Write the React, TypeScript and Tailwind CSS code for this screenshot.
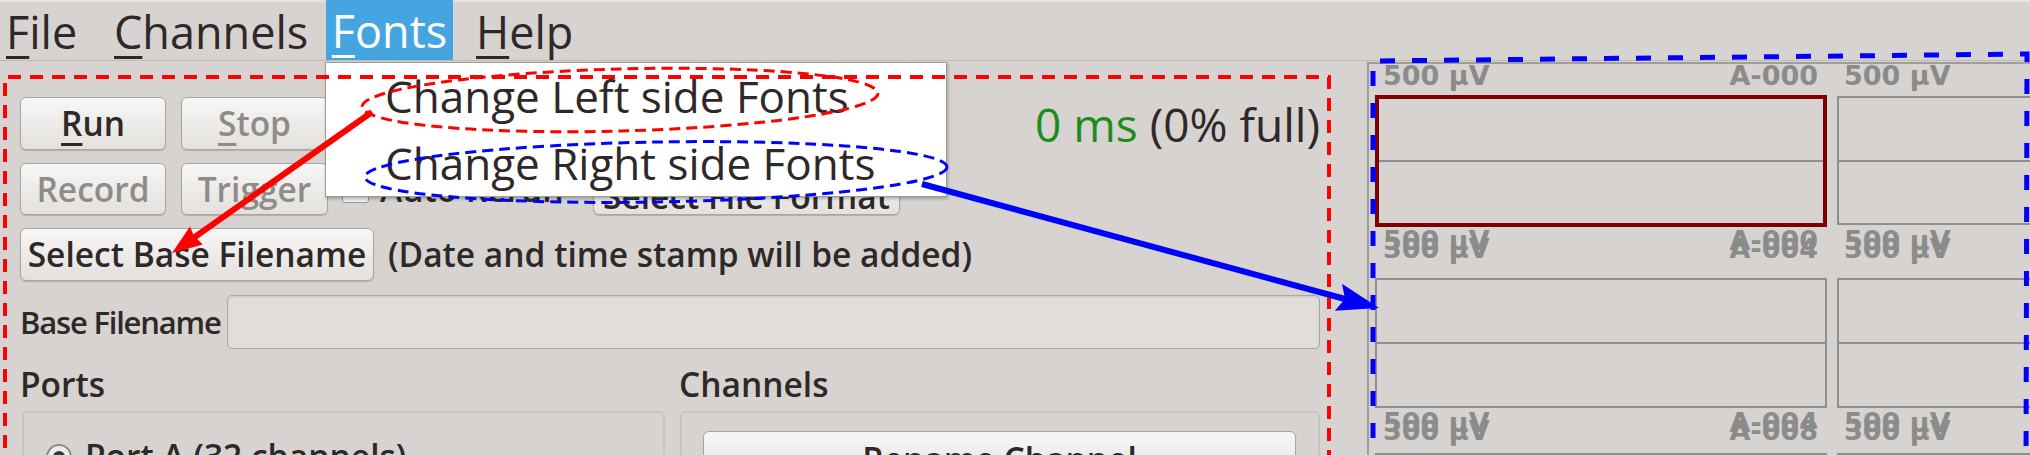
import React from "react";

const ui = "font-['Open_Sans',sans-serif]";
const dv = "font-['DejaVu_Sans',sans-serif] font-bold text-[27px] leading-[27px] text-[#8b8b8b] whitespace-nowrap";

function Btn({
  children,
  className = "",
  disabled = false,
}: {
  children: React.ReactNode;
  className?: string;
  disabled?: boolean;
}) {
  return (
    <div
      className={
        "flex justify-center rounded-[6px] border border-[#a9a5a1] bg-linear-to-b from-[#f8f7f6] to-[#e3e0dd] shadow-[0_1px_1px_rgba(0,0,0,0.18)] text-[33.5px] font-semibold whitespace-nowrap " +
        (disabled ? "text-[#8f8b88] " : "text-[#2f2828] ") +
        className
      }
    >
      {children}
    </div>
  );
}

function Mn({ children }: { children: React.ReactNode }) {
  return (
    <span className="underline decoration-[3px] underline-offset-[7px]">{children}</span>
  );
}

function Over({ a, b }: { a: string; b: string }) {
  return (
    <span className="relative inline-block">
      <span>{a}</span>
      <span className="absolute left-0 top-[8px]">{b}</span>
    </span>
  );
}

function PlotBox({ selected = false, h }: { selected?: boolean; h: string }) {
  return (
    <div
      className={
        "flex flex-col " +
        h +
        (selected ? " border-[4px] border-[#7f0000]" : " border-2 border-[#8e8e8e] my-[1px]")
      }
    >
      <div className="flex-1 border-b-2 border-[#8e8e8e]" />
      <div className="flex-1" />
    </div>
  );
}

export default function App() {
  return (
    <div className={"relative w-[2030px] h-[455px] overflow-hidden bg-[#d6d3d0] text-[#2f2828] " + ui}>
      {/* Menu bar */}
      <div className="h-[61px] border-b border-[#bebab6] border-t-2 border-t-[#e4e2e0] flex items-stretch pl-[6px] text-[45px] leading-none">
        <div className="w-[108px] flex items-center">
          <span><Mn>F</Mn>ile</span>
        </div>
        <div className="w-[212px] flex items-center">
          <span><Mn>C</Mn>hannels</span>
        </div>
        <div className="w-[127px] flex items-center justify-center bg-[#45a5e1] text-white -mt-[2px]">
          <span><Mn>F</Mn>onts</span>
        </div>
        <div className="flex items-center pl-[23px]">
          <span><Mn>H</Mn>elp</span>
        </div>
      </div>

      {/* Body */}
      <div className="flex h-[394px]">
        {/* Left panel */}
        <div className="w-[1367px] shrink-0 pl-[21px] pr-[47px] pt-[36px] flex flex-col">
          <div className="flex items-center h-[53px]">
            <Btn className="w-[146px] h-[53px] -ml-[1px] items-center">
              <span><Mn>R</Mn>un</span>
            </Btn>
            <Btn disabled className="w-[147px] h-[53px] ml-[15px] items-center">
              <span><Mn>S</Mn>top</span>
            </Btn>
            <div className="flex-1" />
            <div className="text-[46px] leading-none whitespace-nowrap">
              <span className="text-[#1d8c1d]">0 ms</span> (0% full)
            </div>
          </div>

          <div className="flex items-center h-[52px] mt-[13px]">
            <Btn disabled className="w-[146px] h-[52px] -ml-[1px] items-center">Record</Btn>
            <Btn disabled className="w-[147px] h-[52px] ml-[15px] items-center">Trigger</Btn>
            <div className="w-[27px] h-[27px] ml-[14px] rounded-[3px] border border-[#9a9692] bg-[#f2f1f0]" />
            <div className="w-[205px] ml-[11px] text-[33.5px] font-semibold whitespace-nowrap overflow-hidden">Auto Rerun</div>
            <Btn className="w-[307px] h-[38px] ml-[8px] self-end items-center">Select File Format</Btn>
          </div>

          <div className="flex items-center h-[53px] mt-[13px]">
            <Btn className="w-[354px] h-[53px] -ml-[1px] items-center">Select Base Filename</Btn>
            <div className="ml-[14px] text-[33.5px] font-semibold whitespace-nowrap">
              (Date and time stamp will be added)
            </div>
          </div>

          <div className="flex items-center h-[54px] mt-[14px]">
            <div className="w-[207px] shrink-0 text-[31px] tracking-[-1.2px] font-semibold whitespace-nowrap -ml-[1px]">Base Filename</div>
            <div className="flex-1 h-[54px] rounded-[5px] border border-[#aca8a4] bg-[#e0dddb] shadow-[inset_0_1px_2px_rgba(0,0,0,0.12)]" />
          </div>

          <div className="grid grid-cols-[643px_640px] gap-x-[15px] mt-[15px] pl-[1px]">
            <div className="h-[40px] flex items-center text-[33.5px] font-semibold -ml-[2px]">Ports</div>
            <div className="h-[40px] flex items-center text-[33.5px] font-semibold -ml-[1px]">Channels</div>
            <div className="mt-[7px] h-[80px] rounded-[5px] border-2 border-[#c7c4c1] pl-[22px] pt-[27px]">
              <div className="flex items-center gap-[13px]">
                <div className="w-[26px] h-[26px] rounded-full border-2 border-[#8d8985] bg-[#eeedec] flex items-center justify-center">
                  <div className="w-[12px] h-[12px] rounded-full bg-[#3b3737]" />
                </div>
                <span className="text-[33.5px] font-semibold whitespace-nowrap leading-none">Port A (32 channels)</span>
              </div>
            </div>
            <div className="mt-[7px] h-[80px] rounded-[5px] border-2 border-[#c7c4c1] pl-[21px] pr-[22px] pt-[18px]">
              <Btn className="h-[54px] w-full items-start pt-[11px] leading-none">Rename Channel</Btn>
            </div>
          </div>
        </div>

        {/* Right panel */}
        <div className="flex-1 mt-[1px] border-l-2 border-t-2 border-[#a19e9a] pl-[6px] overflow-hidden">
          <div className="w-[914px] flex flex-col">
            <div className="grid grid-cols-[452px_452px] gap-x-[10px] h-[31px]">
              <div className="flex justify-between px-[8px] pr-[9px] -mt-[2px]">
                <span className={dv}>500 µV</span>
                <span className={dv}>A-000</span>
              </div>
              <div className="flex justify-between px-[7px] -mt-[2px]">
                <span className={dv}>500 µV</span>
                <span className={dv}>A-001</span>
              </div>
            </div>
            <div className="grid grid-cols-[452px_452px] gap-x-[10px]">
              <PlotBox selected h="h-[132px]" />
              <PlotBox h="h-[129px]" />
            </div>
            <div className="grid grid-cols-[452px_452px] gap-x-[10px] h-[50px]">
              <div className="flex justify-between px-[8px] pr-[9px]">
                <span className={dv}><Over a="500 µV" b="300 µV" /></span>
                <span className={dv}><Over a="A-000" b="A-004" /></span>
              </div>
              <div className="flex justify-between px-[7px]">
                <span className={dv}><Over a="500 µV" b="300 µV" /></span>
                <span className={dv}><Over a="A-001" b="A-005" /></span>
              </div>
            </div>
            <div className="grid grid-cols-[452px_452px] gap-x-[10px]">
              <PlotBox h="h-[130px]" />
              <PlotBox h="h-[130px]" />
            </div>
            <div className="grid grid-cols-[452px_452px] gap-x-[10px] h-[43px]">
              <div className="flex justify-between px-[8px] pr-[9px]">
                <span className={dv}><Over a="500 µV" b="300 µV" /></span>
                <span className={dv}><Over a="A-004" b="A-008" /></span>
              </div>
              <div className="flex justify-between px-[7px]">
                <span className={dv}><Over a="500 µV" b="300 µV" /></span>
                <span className={dv}><Over a="A-005" b="A-009" /></span>
              </div>
            </div>
            <div className="grid grid-cols-[452px_452px] gap-x-[10px]">
              <PlotBox h="h-[130px]" />
              <PlotBox h="h-[130px]" />
            </div>
          </div>
        </div>
      </div>

      {/* Fonts dropdown menu */}
      <div className="absolute left-[325px] top-[62px] w-[622px] h-[135px] bg-white border border-[#9b9b9b] shadow-[1px_2px_3px_rgba(0,0,0,0.25)] flex flex-col text-[44px] leading-none">
        <div className="h-[67px] flex items-center pl-[59px] whitespace-nowrap">Change Left side Fonts</div>
        <div className="h-[67px] flex items-center pl-[59px] whitespace-nowrap">Change Right side Fonts</div>
      </div>

      {/* Annotation overlay */}
      <svg
        className="absolute left-0 top-0 pointer-events-none"
        width={2030}
        height={455}
        viewBox="0 0 2030 455"
      >
        <path
          d="M5 470 L5 77 L1329 77 L1329 470"
          fill="none"
          stroke="#ff0000"
          strokeWidth={4}
          strokeDasharray="13 9"
        />
        <ellipse
          cx={620}
          cy={100}
          rx={258}
          ry={31}
          transform="rotate(-1.5 620 100)"
          fill="none"
          stroke="#ff0000"
          strokeWidth={3}
          strokeDasharray="11 6"
        />
        <ellipse
          cx={656}
          cy={172}
          rx={291}
          ry={30}
          transform="rotate(-1 656 172)"
          fill="none"
          stroke="#0000ff"
          strokeWidth={3}
          strokeDasharray="11 6"
        />
        <line x1={372} y1={112} x2={192} y2={239} stroke="#ff0000" strokeWidth={6} />
        <polygon points="172,253 202.8,244.4 194,236 190,226.6" fill="#ff0000" />
        <line x1={922} y1={184} x2={1345} y2={299} stroke="#0000ff" strokeWidth={6} />
        <polygon points="1379,308 1334.8,310.7 1345,299 1342,283.7" fill="#0000ff" />
        <path
          d="M1373 470 L1373 61 L2027 54 L2026 470"
          fill="none"
          stroke="#0000ff"
          strokeWidth={5}
          strokeDasharray="15 17"
        />
      </svg>
    </div>
  );
}
